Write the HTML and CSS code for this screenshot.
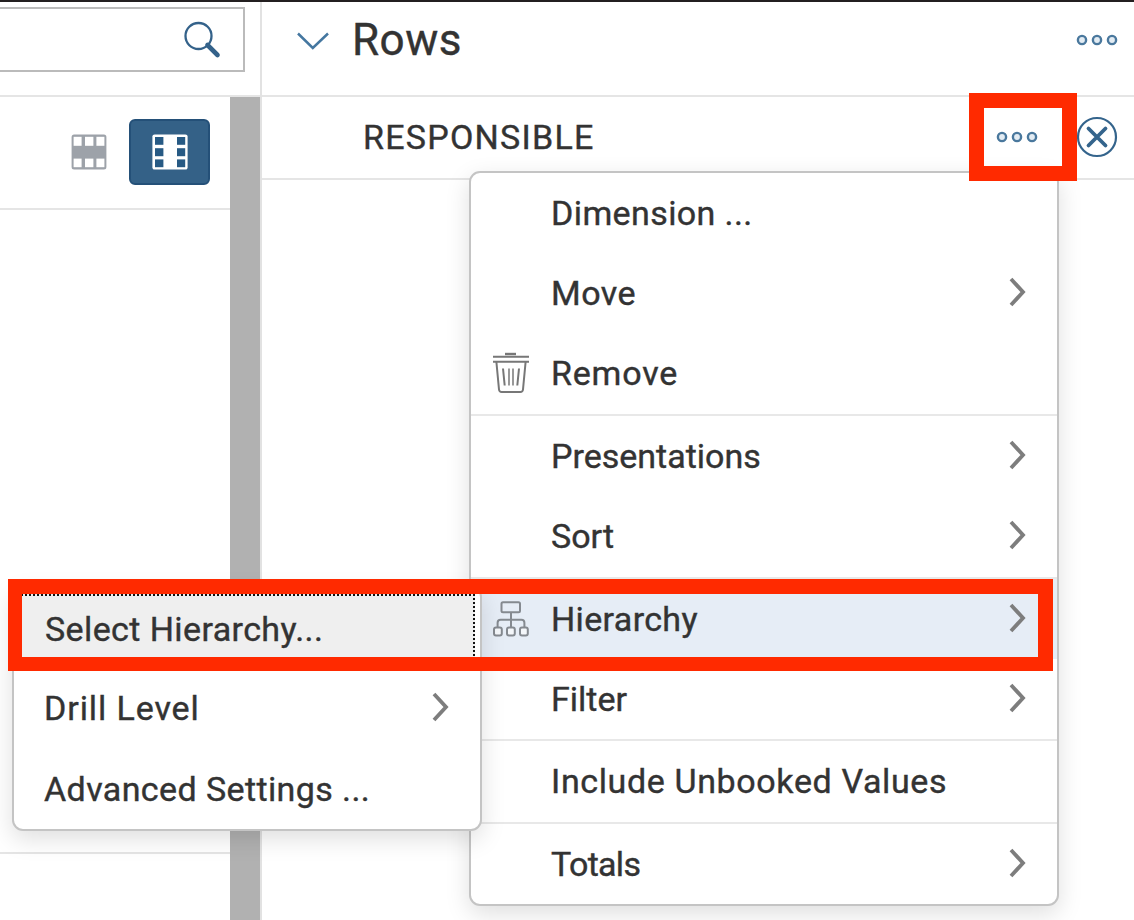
FILE: index.html
```html
<!DOCTYPE html>
<html lang="en">
<head>
<meta charset="utf-8">
<title>Rows</title>
<link rel="stylesheet" href="styles.css">
</head>
<body>
<svg class="defs" width="0" height="0" aria-hidden="true">
  <symbol id="chevron" viewBox="0 0 20 32"><path d="M3 2 15 15 3 28" fill="none" stroke="#7d7d7d" stroke-width="3.8"/></symbol>
  <symbol id="dots" viewBox="0 0 44 14"><g fill="#e3ecf3" stroke="#4a789d" stroke-width="2.4"><circle cx="7" cy="7" r="4.1"/><circle cx="22" cy="7" r="4.1"/><circle cx="37" cy="7" r="4.1"/></g></symbol>
</svg>
<div class="app">
  <aside class="side">
    <div class="search-row">
      <div class="search">
        <svg width="40" height="40" viewBox="0 0 40 40"><circle cx="16.5" cy="16" r="13" fill="none" stroke="#34628a" stroke-width="2.3"/><path d="M25.5 25 35.5 35" stroke="#34628a" stroke-width="4.6" stroke-linecap="round"/></svg>
      </div>
    </div>
    <div class="side-body">
      <div class="side-main">
        <div class="tools">
          <svg width="36" height="36" viewBox="0 0 36 36"><rect x=".6" y=".6" width="34.8" height="34.8" rx="2.5" fill="#9da2a9"/><g fill="#fff"><rect x="2.6" y="2.8" width="8" height="9"/><rect x="14" y="2.8" width="8.4" height="9"/><rect x="25.4" y="2.8" width="8" height="9"/><rect x="2.6" y="24.6" width="8" height="8.6"/><rect x="14" y="24.6" width="8.4" height="8.6"/><rect x="25.4" y="24.6" width="8" height="8.6"/></g></svg>
          <div class="toggle">
            <svg width="36" height="36" viewBox="0 0 36 36"><rect x=".4" y=".4" width="35.2" height="35.2" rx="2.2" fill="#fff"/><g fill="#275a84"><rect x="3" y="3" width="8.4" height="7.8"/><rect x="3" y="14.2" width="8.4" height="8"/><rect x="3" y="25.4" width="8.4" height="7.8"/><rect x="25" y="3" width="8.2" height="7.8"/><rect x="25" y="14.2" width="8.2" height="8"/><rect x="25" y="25.4" width="8.2" height="7.8"/></g></svg>
          </div>
        </div>
        <div class="side-list"></div>
      </div>
      <div class="scrollbar"></div>
    </div>
  </aside>
  <main class="panel">
    <header class="panel-head">
      <svg width="32" height="24" viewBox="0 0 32 24"><path d="M1 5.5 15.8 20 31 5.5" fill="none" stroke="#4577a0" stroke-width="2.5"/></svg>
      <h1 class="title">Rows</h1>
      <svg class="dots" width="44" height="14"><use href="#dots"/></svg>
    </header>
    <div class="field">
      <span class="field-name">RESPONSIBLE</span>
      <svg class="dots" width="44" height="14"><use href="#dots"/></svg>
      <svg class="clear" width="42" height="42" viewBox="0 0 42 42"><circle cx="21" cy="21" r="19" fill="none" stroke="#34648c" stroke-width="2.2"/><path d="M12.5 12.5 29.5 29.5M29.5 12.5 12.5 29.5" stroke="#34648c" stroke-width="3.8" stroke-linecap="round"/></svg>
    </div>
  </main>
</div>

<nav class="menu main-menu">
  <div class="item"><span class="label t-dimension">Dimension ...</span></div>
  <div class="item"><span class="label t-move">Move</span><svg class="arrow"><use href="#chevron"/></svg></div>
  <div class="item remove"><svg class="icon" viewBox="0 0 36 42"><g fill="none" stroke="#777"><path d="M12 2h11" stroke-width="2.4"/><path d="M0 4.7h36M0 9.7h36" stroke-width="2"/><path d="M3.4 10 6 37.5Q6.3 40 8.6 40H27.4Q29.7 40 30 37.5L32.6 10" stroke-width="2"/><path d="M10 16.5 11.7 33.5M26 16.5 24.3 33.5" stroke-width="2"/><path d="M16 16.5V33.5M20 16.5V33.5" stroke="#8e8e8e" stroke-width="1.8"/></g></svg><span class="label t-remove">Remove</span></div>
  <div class="item split"><span class="label">Presentations</span><svg class="arrow"><use href="#chevron"/></svg></div>
  <div class="item"><span class="label">Sort</span><svg class="arrow"><use href="#chevron"/></svg></div>
  <div class="item split active"><svg class="icon" viewBox="0 0 36 42"><g fill="none" stroke="#858a90" stroke-width="2"><rect x="8.5" y="4.2" width="18.5" height="10" rx="1.5"/><path d="M18 14V29M4.6 29V24.8Q4.6 21.8 7.6 21.8H28.4Q31.4 21.8 31.4 24.8V29"/><g fill="#f4f7fa"><rect x="1" y="29.4" width="7.8" height="8" rx="2"/><rect x="14" y="29.4" width="7.8" height="8" rx="2"/><rect x="27" y="29.4" width="7.8" height="8" rx="2"/></g></g></svg><span class="label t-hier">Hierarchy</span><svg class="arrow"><use href="#chevron"/></svg></div>
  <div class="item"><span class="label">Filter</span><svg class="arrow"><use href="#chevron"/></svg></div>
  <div class="item split"><span class="label t-include">Include Unbooked Values</span></div>
  <div class="item split"><span class="label t-totals">Totals</span><svg class="arrow"><use href="#chevron"/></svg></div>
</nav>

<nav class="menu sub-menu">
  <div class="item focused"><span class="label t-select">Select Hierarchy...</span></div>
  <div class="item"><span class="label t-drill">Drill Level</span><svg class="arrow"><use href="#chevron"/></svg></div>
  <div class="item"><span class="label t-adv">Advanced Settings ...</span></div>
</nav>

<div class="mark mark-dots"></div>
<div class="mark mark-hierarchy"></div>
</body>
</html>
```
FILE: styles.css
```css
* { box-sizing: border-box; }
body { margin: 0; background: #fff; color: #333; font-family: Roboto, "Noto Sans", sans-serif; font-size: 34px; overflow: hidden; -webkit-text-stroke: .4px #333; }
svg { display: block; flex: none; }
.defs { position: absolute; }
.app { display: flex; height: 920px; border-top: 2px solid #231f20; }
.side { width: 262px; flex: none; display: flex; flex-direction: column; border-right: 2px solid #e2e2e2; }
.search-row { height: 95px; padding-top: 5px; border-bottom: 2px solid #e5e5e5; }
.search { width: 245px; height: 65px; border: 2px solid #bbb; border-left: 0; display: flex; justify-content: flex-end; padding: 11px 21px 0 0; }
.side-body { flex: 1; display: flex; }
.side-main { flex: 1; }
.tools { height: 113px; border-bottom: 2px solid #e5e5e5; display: flex; justify-content: flex-end; align-items: center; gap: 22px; padding: 0 20px 1px 0; }
.toggle { width: 81px; height: 66px; border: 2px solid #245078; border-radius: 6px; background: #346187; display: grid; place-items: center; }
.side-list { height: 644px; border-bottom: 2px solid #e5e5e5; }
.scrollbar { width: 30px; background: #b1b1b1; }
.panel { flex: 1; }
.panel-head { height: 95px; border-bottom: 2px solid #e5e5e5; display: flex; align-items: center; padding: 0 15px 18px 35px; }
.title { margin: 0 auto 0 23px; font-size: 44px; line-height: 50px; font-weight: 400; letter-spacing: .5px; }
.field { height: 83px; border-bottom: 2px solid #e5e5e5; display: flex; align-items: center; padding: 0 16px 2px 101px; }
.field-name { margin-right: auto; white-space: nowrap; letter-spacing: 1.25px; }
.clear { margin-left: 37px; }
.menu { position: absolute; background: #fff; border: 2px solid #c4c4c4; border-radius: 11px; box-shadow: 0 8px 24px rgba(0, 0, 0, .13); }
.main-menu { left: 469px; top: 171px; width: 590px; height: 735px; }
.sub-menu { left: 12px; top: 586px; width: 470px; height: 245px; }
.item { height: 80.33px; display: flex; align-items: center; padding: 0 29px 0 80px; }
.split { height: 82.33px; border-top: 2px solid #e8e8e8; }
.remove { padding-bottom: 2px; }
.active { background: #e6edf6; }
.label { white-space: nowrap; }
.t-dimension, .t-select, .t-adv { letter-spacing: .4px; }
.t-move { letter-spacing: .5px; }
.t-remove { letter-spacing: .8px; }
.t-hier { letter-spacing: .35px; }
.t-include { letter-spacing: .63px; }
.t-totals { letter-spacing: -.7px; }
.t-drill { letter-spacing: .9px; }
.arrow { width: 20px; height: 32px; margin-left: auto; }
.icon { width: 36px; height: 42px; margin: 0 22px 0 -58px; }
.sub-menu .item { padding-left: 30px; }
.sub-menu .focused { margin: 6px 5px 0 0; height: 74.33px; padding: 0 0 4px 29px; background: #efefef; border: 2px dotted #111; }
.mark { position: absolute; border: 15px solid #ff2a00; }
.mark-dots { left: 969px; top: 93px; width: 108px; height: 88px; }
.mark-hierarchy { left: 8px; top: 579px; width: 1045px; height: 92px; border-width: 15px 15px 14px 14px; }
```
